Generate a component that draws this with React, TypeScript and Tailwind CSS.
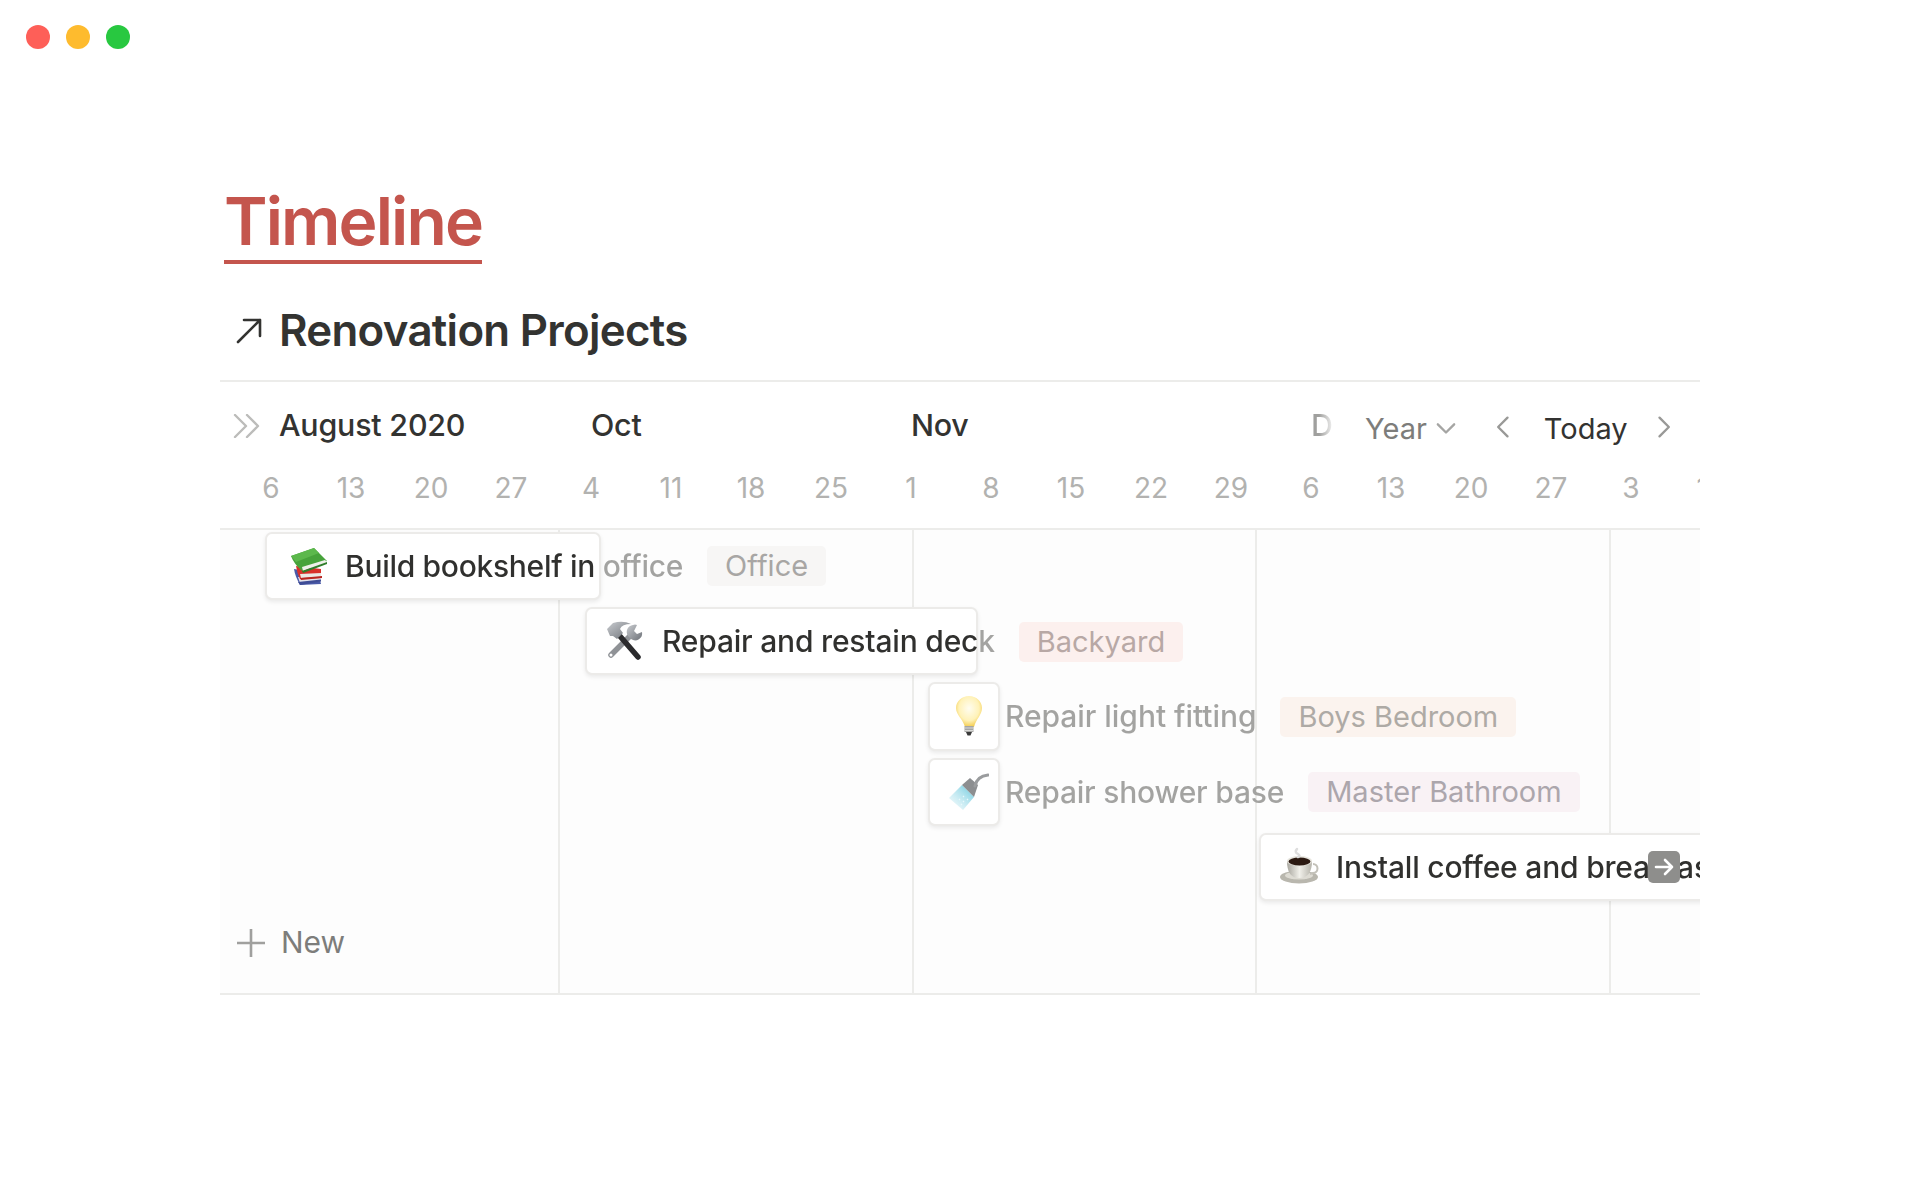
import React from "react";

const Books = () => (
  <svg viewBox="0 0 40 40" className="w-[40px] h-[40px]">
    <path d="M6 23 L30 27 L33 38 L12 39 Q7 30 6 23Z" fill="#4a5aa8" />
    <path d="M10 31 L33 31 L33 35 L12 37Z" fill="#e4e2ea" />
    <path d="M10 36 L33 33.5 L33 35.5 L12 39Z" fill="#3f4d96" />
    <path d="M8 20 L33 23 L33 32 L12 33 Q9 27 8 20Z" fill="#d9302a" />
    <path d="M12 28 L33 27 L33 31 L13 32Z" fill="#ece8e4" />
    <path d="M12 32 L34 30 L34 32 L13 34Z" fill="#b92520" />
    <path d="M3 10 L26 2 L39 15 L14 25 Q6 18 3 10Z" fill="#47a33b" />
    <path d="M3 10 L26 2 L31 7 L8 16Z" fill="#5cb84c" />
    <path d="M14 21 L37 14 L39 16 L15 25Z" fill="#eef0ea" />
    <path d="M14 25 L39 16 L39 18 L15 27Z" fill="#2f7d2a" />
  </svg>
);

const Tools = () => (
  <svg viewBox="0 0 40 40" className="w-[40px] h-[40px]">
    <defs>
      <linearGradient id="steel" x1="0" y1="0" x2="1" y2="1">
        <stop offset="0" stopColor="#c9ccd0" />
        <stop offset="1" stopColor="#6e7278" />
      </linearGradient>
    </defs>
    <path d="M26 14 L6 34" stroke="#8f9296" strokeWidth="5.5" strokeLinecap="round" />
    <circle cx="6" cy="34" r="1.5" fill="#fff" />
    <path d="M28 4 A7 7 0 0 0 23 15 L26 18 A7 7 0 0 0 37 11 L32 13 L29 10 L32 4 Q30 3 28 4Z" fill="url(#steel)" />
    <path d="M14 14 L33 36" stroke="#2b2b2d" strokeWidth="5.5" strokeLinecap="round" />
    <path d="M2 8 L8 2 Q18 -1 26 3 Q17 3 15 8 L18 12 L12 18 L8 15 L5 15Z" fill="url(#steel)" />
  </svg>
);

const Bulb = () => (
  <svg viewBox="0 0 40 40" className="w-[40px] h-[40px]">
    <defs>
      <radialGradient id="glow" cx="0.5" cy="0.4" r="0.6">
        <stop offset="0" stopColor="#fffdf0" />
        <stop offset="0.65" stopColor="#fff2b8" />
        <stop offset="1" stopColor="#f4cc4e" />
      </radialGradient>
    </defs>
    <path d="M20 0 C27 0 33 5 33 12 C33 19 27 23 25 31 L16 31 C14 23 7 19 7 12 C7 5 13 0 20 0Z" fill="url(#glow)" />
    <path d="M15.5 30 H24.5 V36 H15.5Z" fill="#a6a6a4" />
    <path d="M16 32 H24 M16 34.5 H24" stroke="#e6e6e4" strokeWidth="0.8" />
    <path d="M17 36 H23 L21.5 39.5 H18.5Z" fill="#3a3a3a" />
  </svg>
);

const Shower = () => (
  <svg viewBox="0 0 40 40" className="w-[40px] h-[40px]">
    <defs>
      <linearGradient id="water" x1="1" y1="0" x2="0" y2="1">
        <stop offset="0" stopColor="#63c6dc" />
        <stop offset="1" stopColor="#d8f1f6" stopOpacity="0.3" />
      </linearGradient>
    </defs>
    <path d="M13 13 L25 25 L14 38 L0 26Z" fill="url(#water)" />
    <path d="M13 13 L25 25 L29 13 L21 6Z" fill="#8c8e90" />
    <path d="M26 14 Q28 4 39 3" stroke="#9a9c9e" strokeWidth="3" fill="none" strokeLinecap="round" />
    <path d="M10 27 l1 1 M14 24 l1 1 M14 29 l1 1 M18 27 l1 1 M12 32 l1 1" stroke="#e8f8fb" strokeWidth="1.2" />
  </svg>
);

const Coffee = () => (
  <svg viewBox="0 0 40 40" className="w-[40px] h-[40px]">
    <defs>
      <linearGradient id="cup" x1="0" y1="0" x2="1" y2="0">
        <stop offset="0" stopColor="#a8a69e" />
        <stop offset="0.5" stopColor="#f1f0ea" />
        <stop offset="1" stopColor="#b5b3aa" />
      </linearGradient>
    </defs>
    <ellipse cx="19" cy="30" rx="19" ry="6.5" fill="#b9b7ae" />
    <ellipse cx="19" cy="28.5" rx="14" ry="4" fill="#dddbd3" />
    <path d="M33 17 a4.5 4.5 0 0 1 0 9 l-3 1" stroke="#c3c1b9" strokeWidth="2" fill="none" />
    <path d="M7 14 Q7 31 19 31 Q32 31 32 14Z" fill="url(#cup)" />
    <ellipse cx="19.5" cy="14" rx="12.5" ry="5" fill="#e8e6df" />
    <ellipse cx="19.5" cy="14.5" rx="11" ry="4" fill="#2c1a12" />
    <path d="M17 2 Q14 5 18 7 Q21 9 18 10" stroke="#dedede" strokeWidth="2.5" fill="none" strokeLinecap="round" />
  </svg>
);

const rows = [
  {
    left: 45, w: 336, iconX: 23, textX: 80, icon: <Books />, title: "Build bookshelf in office",
    cls: "tracking-[-0.3px] bg-[linear-gradient(90deg,#30302e_255px,#a3a3a1_255px)]",
    tag: "Office", tagCls: "bg-[#f7f6f5] text-[#a8a6a4]",
  },
  {
    left: 365, w: 393, iconX: 20, textX: 77, icon: <Tools />, title: "Repair and restain deck",
    cls: "tracking-[-0.2px] bg-[linear-gradient(90deg,#30302e_315px,#a3a3a1_315px)]",
    tag: "Backyard", tagCls: "bg-[#fcf0ee] text-[#b8a8a5]",
  },
  {
    left: 708, w: 72, iconX: 21, textX: 77, icon: <Bulb />, title: "Repair light fitting",
    cls: "tracking-[-0.05px] bg-[linear-gradient(90deg,#a3a3a1,#a3a3a1)]",
    tag: "Boys Bedroom", tagCls: "bg-[#fbf3ee] text-[#aeaaa5]",
  },
  {
    left: 708, w: 72, iconX: 21, textX: 77, icon: <Shower />, title: "Repair shower base",
    cls: "tracking-[-0.2px] bg-[linear-gradient(90deg,#a3a3a1,#a3a3a1)]",
    tag: "Master Bathroom", tagCls: "bg-[#f9f2f5] text-[#aca6ac]",
  },
  {
    left: 1039, w: 462, iconX: 21, textX: 77, icon: <Coffee />, title: "Install coffee and breakfast",
    cls: "tracking-[-0.2px] bg-[linear-gradient(90deg,#30302e,#30302e)]",
    tag: "", tagCls: "",
  },
];

const days = [6, 13, 20, 27, 4, 11, 18, 25, 1, 8, 15, 22, 29, 6, 13, 20, 27, 3, 10];

const Chevron = ({ d, cls }: { d: string; cls: string }) => (
  <svg viewBox="0 0 24 24" fill="none" stroke="currentColor" strokeWidth="2" strokeLinecap="round" strokeLinejoin="round" className={cls}>
    <path d={d} />
  </svg>
);

export default function App() {
  return (
    <div className="min-h-[1200px] w-[1920px] bg-white font-[Inter,sans-serif] overflow-hidden">
      <div className="flex gap-[16px] pl-[26px] pt-[25px] h-[74px]">
        <div className="w-[24px] h-[24px] rounded-full bg-[#fe5f58]" />
        <div className="w-[24px] h-[24px] rounded-full bg-[#febb2e]" />
        <div className="w-[24px] h-[24px] rounded-full bg-[#28c840]" />
      </div>

      <div className="ml-[220px] w-[1480px]">
        <div className="pl-[4px] pt-[108px]">
          <h1 className="inline-block text-[66px] leading-[78px] font-semibold tracking-[-1.9px] text-[#c4554d] border-b-[4px] border-[#c4554d]">
            Timeline
          </h1>
        </div>

        <div className="flex items-center h-[80px] mt-[27px] pl-[16px]">
          <svg viewBox="0 0 26 26" fill="none" stroke="#333331" strokeWidth="2.6" strokeLinecap="round" strokeLinejoin="round" className="w-[26px] h-[26px]">
            <path d="M2 24 L24 2 M8 2 H24 V18" />
          </svg>
          <h2 className="ml-[17px] text-[43.8px] leading-[50px] font-semibold tracking-[-0.7px] text-[#333331]">
            Renovation Projects
          </h2>
        </div>

        <div className="mt-[9px] border-y-[2px] border-[#ececea] overflow-hidden">
          <div className="flex items-center h-[88px] pl-[13px]">
            <svg viewBox="0 0 28 24" fill="none" stroke="#bcbcba" strokeWidth="2.4" strokeLinecap="round" strokeLinejoin="round" className="w-[28px] h-[24px] shrink-0">
              <path d="M2 1 L13 12 L2 23 M14 1 L25 12 L14 23" />
            </svg>
            <div className="ml-[18px] w-[312px] text-[30.4px] font-medium tracking-[-0.2px] text-[#333331]">August 2020</div>
            <div className="w-[320px] text-[30.4px] font-medium tracking-[-0.2px] text-[#333331]">Oct</div>
            <div className="w-[400px] text-[30.4px] font-medium tracking-[-0.2px] text-[#333331]">Nov</div>
            <div className="w-[54px] text-[30.4px] font-medium bg-[linear-gradient(90deg,#a0a09e_8px,#ffffff_24px)] bg-clip-text text-transparent">D</div>
            <div className="flex items-center text-[29px] text-[#7d7d7b] mt-[6px]">
              Year
              <Chevron d="M5 8 L12 15 L19 8" cls="ml-[5px] w-[28px] h-[28px] text-[#a5a5a3]" />
            </div>
            <Chevron d="M15 4 L7 12 L15 20" cls="ml-[30px] w-[28px] h-[28px] text-[#999997] mt-[2px]" />
            <div className="ml-[26px] text-[29px] text-[#333331] mt-[6px]">Today</div>
            <Chevron d="M9 4 L17 12 L9 20" cls="ml-[21px] w-[28px] h-[28px] text-[#999997] mt-[2px]" />
          </div>

          <div className="flex h-[36px] mb-[22px] pl-[11px]">
            {days.map((d, i) => (
              <div key={i} className="w-[80px] shrink-0 text-center text-[28px] leading-[36px] text-[#b2b2b0]">
                {d}
              </div>
            ))}
          </div>

          <div className="relative h-[465px] border-t-[2px] border-[#ececea] bg-[#fdfdfd]">
            <div className="absolute inset-0 flex">
              <div className="w-[340px] h-full border-r-[2px] border-[#ececea]" />
              <div className="w-[354px] h-full border-r-[2px] border-[#ececea]" />
              <div className="w-[343px] h-full border-r-[2px] border-[#ececea]" />
              <div className="w-[354px] h-full border-r-[2px] border-[#ececea]" />
            </div>

            <div className="relative -mt-[2px]">
              {rows.map((r) => (
                <div key={r.title} className="flex items-center h-[75.4px] whitespace-nowrap">
                  <div className="relative flex items-center h-full" style={{ marginLeft: r.left }}>
                    <div
                      className="absolute left-0 top-[3.5px] bottom-[3.5px] bg-white rounded-[7px] border-[2px] border-[#ecebe9] shadow-[0_2px_4px_rgba(0,0,0,0.08)]"
                      style={{ width: r.w }}
                    />
                    <div className="relative shrink-0" style={{ marginLeft: r.iconX, width: r.textX - r.iconX }}>
                      {r.icon}
                    </div>
                    <span className={`relative text-[30px] leading-[40px] font-medium bg-clip-text text-transparent ${r.cls}`}>
                      {r.title}
                    </span>
                    {r.tag && (
                      <span className={`relative ml-[24px] mt-[1px] px-[18px] text-[29px] leading-[40px] rounded-[5px] ${r.tagCls}`}>
                        {r.tag}
                      </span>
                    )}
                  </div>
                </div>
              ))}
              <div className="flex items-center h-[75.4px] pl-[17px] text-[30px] text-[#7d7d7b]">
                <svg viewBox="0 0 28 28" fill="none" stroke="#a0a09e" strokeWidth="2.6" className="w-[28px] h-[28px]">
                  <path d="M0 14 H28 M14 0 V28" />
                </svg>
                <span className="ml-[16px]">New</span>
              </div>
            </div>

            <div className="absolute right-[20px] top-[321px] w-[32px] h-[32px] rounded-[5px] bg-[#8e8e8c] flex items-center justify-center">
              <svg viewBox="0 0 24 24" fill="none" stroke="#ffffff" strokeWidth="2.6" strokeLinecap="round" strokeLinejoin="round" className="w-[24px] h-[24px]">
                <path d="M4 12 H20 M13 5 L20 12 L13 19" />
              </svg>
            </div>
          </div>
        </div>
      </div>
    </div>
  );
}
